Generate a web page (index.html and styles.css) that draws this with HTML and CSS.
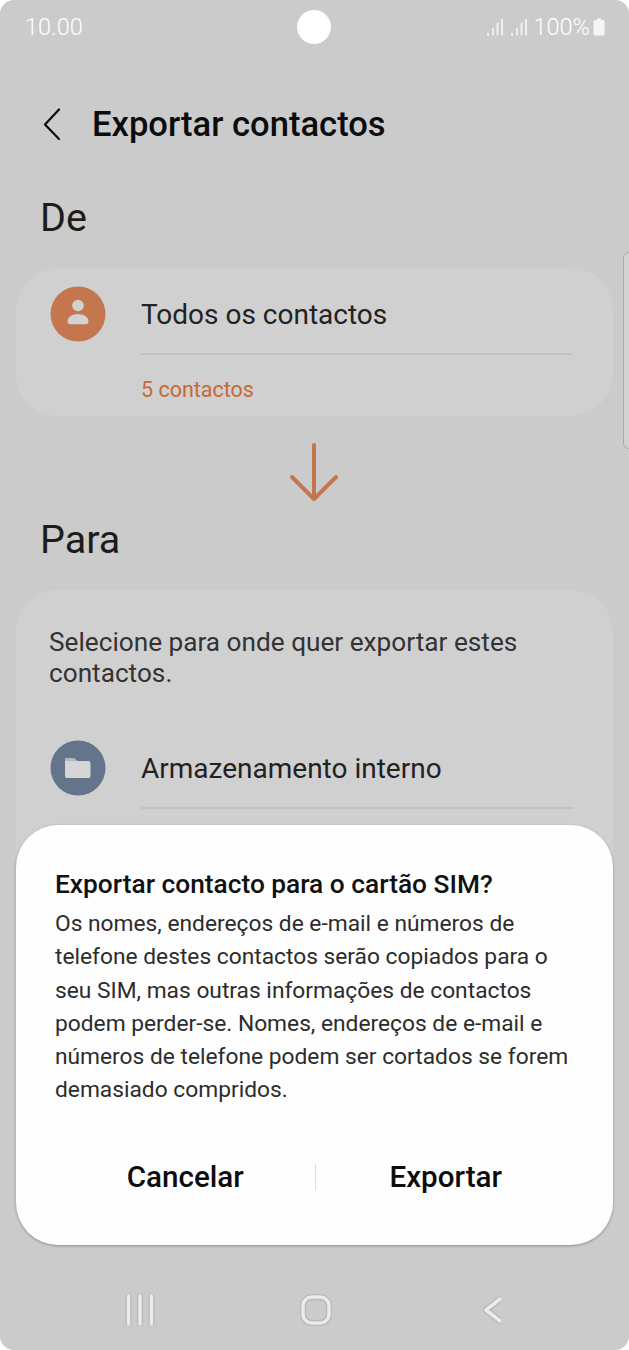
FILE: index.html
```html
<!DOCTYPE html>
<html lang="pt">
<head>
<meta charset="utf-8">
<title>Exportar contactos</title>
<link rel="stylesheet" href="styles.css">
</head>
<body>
<div class="phone">
  <div class="status">
    <span class="time">10.00</span>
    <span class="camera"></span>
    <div class="status-right">
      <svg class="signal" width="16" height="18" viewBox="0 0 16 18"><path d="M1 15v2.500M6 10v7.500M10.500 5v12.500M15 1v16.500" class="bars"/></svg>
      <svg class="signal" width="16" height="18" viewBox="0 0 16 18"><path d="M1 15v2.500M6 10v7.500M10.500 5v12.500M15 1v16.500" class="bars"/></svg>
      <span class="pct">100%</span>
      <svg class="battery" width="12" height="18" viewBox="0 0 12 18"><path d="M4 0.500h4v1.500h2a1.500 1.500 0 0 1 1.500 1.500v12.500a1.500 1.500 0 0 1-1.500 1.500h-8a1.500 1.500 0 0 1-1.500-1.500v-12.500a1.500 1.500 0 0 1 1.500-1.500h2z" fill="#f5f5f5"/></svg>
    </div>
  </div>
  <header class="appbar">
    <svg class="back" width="20" height="32" viewBox="0 0 20 32"><path d="M17 1.500 3 16.500 17 31" fill="none" stroke="#0c0c0c" stroke-width="2.200" stroke-linecap="round" stroke-linejoin="round"/></svg>
    <h1 class="title">Exportar contactos</h1>
  </header>
  <h2 class="section first">De</h2>
  <section class="card from">
    <div class="row">
      <svg class="avatar" width="56" height="56" viewBox="0 0 56 56"><circle cx="28" cy="28" r="27.500" fill="#c4764f"/><circle cx="28" cy="19.500" r="5.800" fill="#d2d2d2"/><path d="M28 28c-6.500 0-10.500 3.700-10.500 7.500 0 2.400 2 2.800 4 2.800h13c2 0 4-.4 4-2.800 0-3.800-4-7.500-10.500-7.500z" fill="#d2d2d2"/></svg>
      <div class="label">Todos os contactos</div>
    </div>
    <div class="sub">5 contactos</div>
  </section>
  <div class="arrow-wrap">
    <svg width="50" height="60" viewBox="0 0 50 60"><path d="M25 2v54M3 34l22 22 22-22" fill="none" stroke="#c4764f" stroke-width="4" stroke-linecap="round" stroke-linejoin="round"/></svg>
  </div>
  <h2 class="section">Para</h2>
  <section class="card to">
    <p class="hint">Selecione para onde quer exportar estes contactos.</p>
    <div class="row row-storage">
      <svg class="avatar" width="56" height="56" viewBox="0 0 56 56"><circle cx="28" cy="28" r="27.500" fill="#64748a"/><path d="M15 20a2 2 0 0 1 2-2h7l3 3h11.500a2 2 0 0 1 2 2v13a2 2 0 0 1-2 2H17a2 2 0 0 1-2-2z" fill="#d6d6d6"/><path d="M15 20a2 2 0 0 1 2-2h7l3 3H15z" fill="#b4b9c0"/></svg>
      <div class="label">Armazenamento interno</div>
    </div>
  </section>

  <nav class="navbar">
    <svg width="30" height="32" viewBox="0 0 30 32"><path d="M3.500 2v28M15 2v28M26.500 2v28" class="navicon"/></svg>
    <svg width="32" height="32" viewBox="0 0 32 32"><rect x="3" y="3" width="26" height="26" rx="9" class="navicon"/></svg>
    <svg width="24" height="32" viewBox="0 0 24 32"><path d="M23 5 9 16l14 11" class="navicon"/></svg>
  </nav>

  <div class="scrollthumb"></div>

  <div class="dialog">
    <h3 class="dlg-title">Exportar contacto para o cartão SIM?</h3>
    <p class="dlg-body">Os nomes, endereços de e-mail e números de telefone destes contactos serão copiados para o seu SIM, mas outras informações de contactos podem perder-se. Nomes, endereços de e-mail e números de telefone podem ser cortados se forem demasiado compridos.</p>
    <div class="dlg-actions">
      <span class="dlg-btn">Cancelar</span>
      <span class="dlg-sep"></span>
      <span class="dlg-btn">Exportar</span>
    </div>
  </div>
</div>
</body>
</html>
```
FILE: styles.css
```css
* { box-sizing: border-box; }
html, body { margin: 0; padding: 0; background: #fff; }
body { width: 629px; height: 1350px; overflow: hidden; font-family: Roboto, "Liberation Sans", sans-serif; }
.phone { position: relative; width: 629px; height: 1350px; background: #cbcbcb; border-radius: 14px; overflow: hidden; display: flex; flex-direction: column; }
.status { height: 54px; padding: 0 25px; display: grid; grid-template-columns: 1fr auto 1fr; align-items: center; color: #fff; }
.time { font-size: 23.500px; font-weight: 300; }
.camera { width: 34px; height: 34px; border-radius: 50%; background: #fff; margin-left: -1px; }
.status-right { display: flex; align-items: center; justify-content: flex-end; margin-right: -1px; }
.signal { margin-right: 8px; }
.signal + .pct { margin-left: -1px; }
.bars { fill: none; stroke: #f4f4f4; stroke-width: 1.800; }
.pct { font-size: 23.500px; font-weight: 300; }
.battery { margin-left: 3px; }
.appbar { display: flex; align-items: center; gap: 30px; padding: 0 0 0 42px; height: 48px; margin-top: 46px; }
.title { margin: 0; font-size: 34.600px; font-weight: 500; color: #0c0c0c; line-height: 48px; }
.back { flex: none; }
.section { margin: 0 0 0 40px; font-size: 39.500px; font-weight: 400; line-height: 46px; color: #1c1c1c; }
.section.first { margin-top: 47px; }
.section:not(.first) { margin-top: 14px; }
.card { margin: 0 16px; background: #d0d0d0; border-radius: 42px; }
.from { margin-top: 27px; height: 148px; padding: 18px 40px 0 34px; }
.row { display: flex; align-items: flex-start; gap: 35px; }
.avatar { flex: none; }
.label { flex: 1; height: 69px; line-height: 58px; font-size: 28px; color: #222; border-bottom: 2px solid #c2c2c2; }
.sub { margin: 20px 0 0 91px; font-size: 21.500px; color: #c66a35; line-height: 30px; }
.arrow-wrap { display: flex; justify-content: center; margin: 27px 2px 0 0; height: 60px; }
.to { margin-top: 27px; height: 420px; padding: 37px 40px 0 34px; }
.hint { margin: 0 0 0 -1px; font-size: 26.200px; line-height: 31px; color: #333; }
.row-storage { margin: 51px 0 0; }
.navbar { position: absolute; left: 0; right: 0; bottom: 24px; padding-left: 125px; display: flex; gap: 145px; align-items: center; }
.navicon { fill: none; stroke: #ececec; stroke-width: 3.500; stroke-linecap: round; stroke-linejoin: round; filter: drop-shadow(0 0 1px rgba(0,0,0,.3)); }
.scrollthumb { position: absolute; right: -6px; top: 252px; width: 12px; height: 197px; border: 1.500px solid #a9a9a9; border-radius: 6px; background: #d2d2d2; }
.dialog { position: absolute; left: 16px; top: 825px; width: 597px; height: 420px; background: #fefefe; border-radius: 42px; box-shadow: 0 1px 3px rgba(0,0,0,.3); padding: 42px 39px 0 40px; }
.dlg-title { margin: -1px 0 0 -1px; font-size: 26.300px; font-weight: 500; color: #111; line-height: 36px; }
.dlg-body { margin: 5px 0 0 -1px; font-size: 22.750px; line-height: 33.300px; color: #2c2c2c; width: 525px; }
.dlg-actions { display: grid; grid-template-columns: 1fr 2px 1fr; align-items: center; position: absolute; left: 40px; right: 38px; top: 332px; height: 40px; }
.dlg-btn { text-align: center; font-size: 29.600px; font-weight: 500; color: #0c0c0c; }
.dlg-sep { width: 1px; height: 26px; background: #ddd; justify-self: center; }
```
